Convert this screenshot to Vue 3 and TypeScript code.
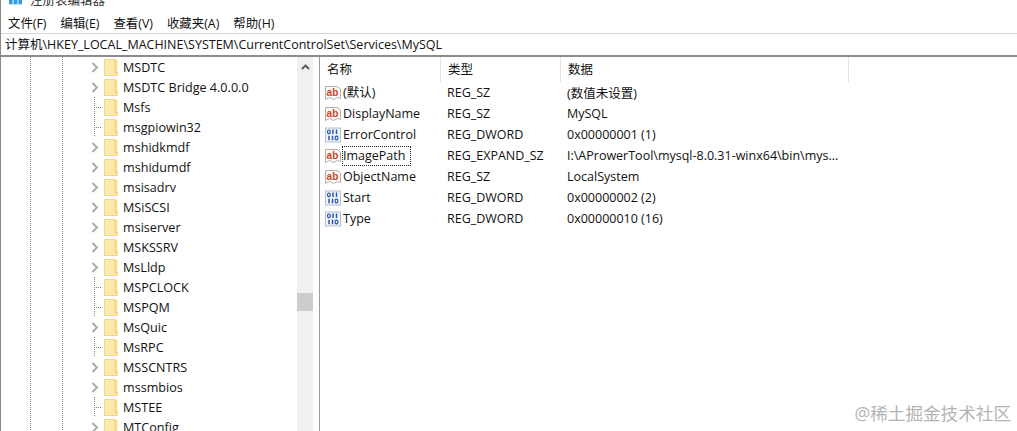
<script setup lang="ts">
const menus = ['文件(F)', '编辑(E)', '查看(V)', '收藏夹(A)', '帮助(H)']
const tree: { name: string; open: boolean }[] = [
  { name: 'MSDTC', open: true },
  { name: 'MSDTC Bridge 4.0.0.0', open: true },
  { name: 'Msfs', open: false },
  { name: 'msgpiowin32', open: false },
  { name: 'mshidkmdf', open: true },
  { name: 'mshidumdf', open: true },
  { name: 'msisadrv', open: true },
  { name: 'MSiSCSI', open: true },
  { name: 'msiserver', open: true },
  { name: 'MSKSSRV', open: true },
  { name: 'MsLldp', open: true },
  { name: 'MSPCLOCK', open: false },
  { name: 'MSPQM', open: false },
  { name: 'MsQuic', open: true },
  { name: 'MsRPC', open: false },
  { name: 'MSSCNTRS', open: true },
  { name: 'mssmbios', open: true },
  { name: 'MSTEE', open: false },
  { name: 'MTConfig', open: true },
]
const values: { name: string; type: string; data: string; kind: 'ab' | 'bin'; focus?: boolean }[] = [
  { name: '(默认)', type: 'REG_SZ', data: '(数值未设置)', kind: 'ab' },
  { name: 'DisplayName', type: 'REG_SZ', data: 'MySQL', kind: 'ab' },
  { name: 'ErrorControl', type: 'REG_DWORD', data: '0x00000001 (1)', kind: 'bin' },
  { name: 'ImagePath', type: 'REG_EXPAND_SZ', data: 'I:\\AProwerTool\\mysql-8.0.31-winx64\\bin\\mys...', kind: 'ab', focus: true },
  { name: 'ObjectName', type: 'REG_SZ', data: 'LocalSystem', kind: 'ab' },
  { name: 'Start', type: 'REG_DWORD', data: '0x00000002 (2)', kind: 'bin' },
  { name: 'Type', type: 'REG_DWORD', data: '0x00000010 (16)', kind: 'bin' },
]
</script>

<template>
  <div class="win">
    <div class="title">
      <svg class="appicon" width="13" height="5" viewBox="0 0 13 5">
        <rect x="0" y="0" width="13" height="5" fill="#bfe3f7" />
        <rect x="0" y="0" width="3.4" height="4" fill="#2f9be0" />
        <rect x="4.8" y="0" width="3.4" height="4" fill="#2f9be0" />
        <rect x="9.6" y="0" width="3.4" height="4" fill="#2f9be0" />
      </svg>
      <span class="title-text">注册表编辑器</span>
    </div>
    <div class="menu">
      <span v-for="m in menus" :key="m" class="menu-item">{{ m }}</span>
    </div>
    <div class="address">计算机\HKEY_LOCAL_MACHINE\SYSTEM\CurrentControlSet\Services\MySQL</div>
    <div class="main">
      <div class="tree">
        <div class="tree-list">
          <div v-for="t in tree" :key="t.name" class="node">
            <span class="guide"></span>
            <span class="guide"></span>
            <span class="exp">
              <svg v-if="t.open" width="8" height="11" viewBox="0 0 8 11"><path d="M1.5 1 L6 5.5 L1.5 10" fill="none" stroke="#a6a6a6" stroke-width="1.8" /></svg>
              <span v-else class="tick"></span>
            </span>
            <svg class="folder" width="14" height="17" viewBox="0 0 14 17">
              <path d="M0.5 0.5 H13.5 V16.5 H0.5 Z" fill="#fde08c" />
              <path d="M0.5 0.5 H10.5 L11 14 L13.5 16.5 H0.5 Z" fill="#feeaaf" />
              <path d="M0.5 0.5 H11 V13.5 H13.5 V16.5 H0.5 Z" fill="none" stroke="#e8c468" stroke-width="0.6" />
            </svg>
            <span class="node-name">{{ t.name }}</span>
          </div>
        </div>
        <div class="scrollbar">
          <svg class="up" width="9" height="6" viewBox="0 0 9 6"><path d="M1 5 L4.5 1.5 L8 5" fill="none" stroke="#555" stroke-width="1.8" /></svg>
          <div class="thumb"></div>
        </div>
      </div>
      <div class="split"></div>
      <div class="list">
        <div class="head">
          <span class="col c1">名称</span>
          <span class="col c2">类型</span>
          <span class="col c3">数据</span>
        </div>
        <div v-for="v in values" :key="v.name" class="row">
          <span class="c1 name-cell">
            <svg class="vicon" width="16" height="16" viewBox="0 0 16 16">
              <template v-if="v.kind === 'ab'">
                <path d="M0.5 1.5 H12 L15.5 4 V13.5 L12.5 12.5 L8.5 14.5 L4.5 12.5 L0.5 14.5 Z" fill="#fdfaf6" stroke="#b5b0aa" stroke-width="1" />
                <text x="1.6" y="10.6" class="abtext">ab</text>
              </template>
              <template v-else>
                <rect x="0.5" y="1" width="15" height="14" fill="#f2f5fc" stroke="#b4bdd6" stroke-width="1" />
                <rect x="2.6" y="3" width="2.6" height="3.6" rx="1" fill="none" stroke="#2c57b4" stroke-width="1.2" />
                <path d="M8 2.6 V7 M11.5 2.6 V7" stroke="#2c57b4" stroke-width="1.5" />
                <path d="M4 8.8 V13.2 M7.5 8.8 V13.2" stroke="#2c57b4" stroke-width="1.5" />
                <rect x="10.2" y="9.2" width="2.6" height="3.6" rx="1" fill="none" stroke="#2c57b4" stroke-width="1.2" />
              </template>
            </svg>
            <span class="vname" :class="{ focus: v.focus }">{{ v.name }}</span>
          </span>
          <span class="c2 cell">{{ v.type }}</span>
          <span class="c3 cell">{{ v.data }}</span>
        </div>
      </div>
    </div>
    <div class="mark">@稀土掘金技术社区</div>
  </div>
</template>

<style scoped>
.win {
  position: relative;
  width: 1017px;
  height: 431px;
  overflow: hidden;
  background: #fff;
  color: #111;
  font-family: "Open Sans", "Noto Sans CJK SC", sans-serif;
  font-size: 12.5px;
  display: flex;
  flex-direction: column;
  box-sizing: border-box;
  border-left: 1px solid #8a8a8a;
}
.title {
  height: 12px;
  flex: none;
  display: flex;
  align-items: flex-start;
  padding-left: 8px;
  gap: 8px;
  overflow: hidden;
}
.appicon { flex: none; }
.title-text {
  font-size: 12.5px;
  line-height: 16px;
  margin-top: -7px;
  color: #333;
}
.menu {
  height: 21px;
  flex: none;
  display: flex;
  align-items: center;
  padding-left: 7px;
  gap: 14px;
  font-size: 12.4px;
}
.address {
  height: 21px;
  flex: none;
  line-height: 21px;
  padding-left: 4px;
  border-top: 1px solid #d6d6d6;
  border-bottom: 2px solid #8c8c8c;
  font-size: 12.5px;
  white-space: nowrap;
}
.main {
  flex: 1;
  min-height: 0;
  display: flex;
}
.tree {
  width: 312px;
  flex: none;
  display: flex;
  overflow: hidden;
}
.tree-list {
  flex: 1;
  min-width: 0;
  overflow: hidden;
}
.node {
  height: 20px;
  display: flex;
  align-items: center;
  padding-left: 29px;
}
.guide {
  width: 32px;
  height: 20px;
  flex: none;
  background: repeating-linear-gradient(to bottom, #808080 0 1px, transparent 1px 2px) left top / 1px 100% no-repeat;
}
.exp {
  width: 13px;
  height: 20px;
  flex: none;
  display: flex;
  align-items: center;
  margin-left: -3px;
}
.tick {
  display: block;
  width: 7px;
  height: 20px;
  margin-left: 3px;
  background:
    repeating-linear-gradient(to bottom, #808080 0 1px, transparent 1px 2px) left top / 1px 100% no-repeat,
    repeating-linear-gradient(to right, #808080 0 1px, transparent 1px 2px) left 10px / 100% 1px no-repeat;
}
.folder { flex: none; }
.node-name {
  margin-left: 5px;
  white-space: nowrap;
  font-size: 12.6px;
}
.scrollbar {
  width: 16px;
  flex: none;
  background: #f0f0f0;
  display: flex;
  flex-direction: column;
  align-items: center;
  padding-top: 7px;
}
.up { flex: none; }
.thumb {
  width: 16px;
  height: 18px;
  background: #cdcdcd;
  margin-top: 223px;
  flex: none;
}
.split {
  width: 7px;
  flex: none;
  border-right: 1px solid #9a9a9a;
  box-sizing: border-box;
}
.list {
  flex: 1;
  min-width: 0;
}
.head {
  height: 25px;
  display: flex;
  align-items: center;
}
.col {
  height: 25px;
  line-height: 25px;
  box-sizing: border-box;
  padding-left: 7px;
  border-right: 1px solid #e3e3e3;
}
.c1 { width: 121px; flex: none; }
.c2 { width: 120px; flex: none; }
.c3 { width: 288px; flex: none; }
.row {
  height: 21px;
  display: flex;
  align-items: center;
}
.name-cell {
  display: flex;
  align-items: center;
  padding-left: 5px;
  box-sizing: border-box;
}
.vicon { flex: none; }
.abtext {
  font-family: "Liberation Sans", sans-serif;
  font-size: 10px;
  font-weight: 700;
  fill: #c8452a;
}
.vname {
  margin-left: 1px;
  padding: 0 2px 0 0;
  line-height: 18px;
  white-space: nowrap;
  border: 1px dotted transparent;
  box-sizing: border-box;
}
.vname.focus {
  border-color: #222;
  padding-right: 5px;
}
.cell {
  padding-left: 6px;
  box-sizing: border-box;
  white-space: nowrap;
}
.mark {
  position: absolute;
  right: 6px;
  bottom: 6px;
  font-size: 17.6px;
  color: #b4b4b4;
  white-space: nowrap;
}
</style>
